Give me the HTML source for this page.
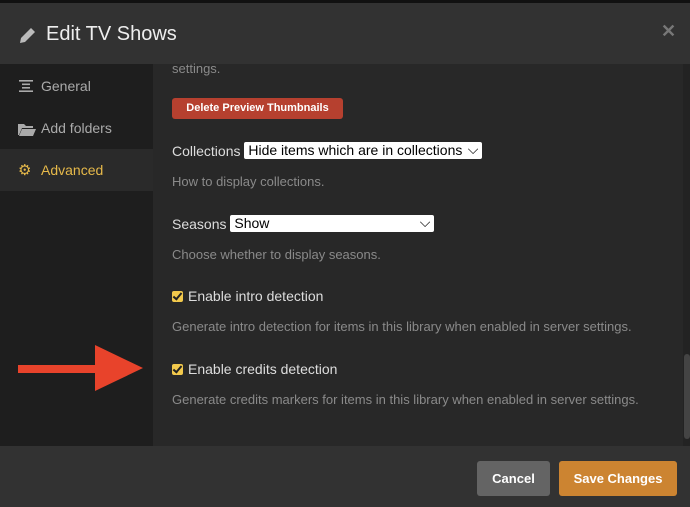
<!DOCTYPE html>
<html><head><style>
*{margin:0;padding:0;box-sizing:border-box}
body{width:690px;height:507px;background:#111;font-family:"Liberation Sans",sans-serif;position:relative;overflow:hidden}
.hdr{position:absolute;left:0;top:3px;width:690px;height:61px;background:#323232}
.hdr h1{position:absolute;left:46px;top:20px;font-size:20px;font-weight:normal;color:#eee}
.side{position:absolute;left:0;top:64px;width:153px;height:382px;background:#1e1e1e}
.item{position:absolute;left:0;width:153px;height:42px;color:#aaa;font-size:14px;line-height:42px;padding-left:41px}
.act{background:#2a2a2a;color:#e6b94a}
.content{position:absolute;left:153px;top:64px;width:537px;height:382px;background:#282828;color:#ddd;font-size:14px}
.t{position:absolute;left:19px;white-space:nowrap;line-height:18px}
.g{color:#8a8a8a;font-size:13px}
.sel{display:inline-block;background:#fff;color:#000;border-radius:2px;height:17px;line-height:17px;padding:0 4px;font-size:14px;vertical-align:top;position:relative}
.cb{display:inline-block;width:11px;height:11px;background:#f2c94c;border-radius:2px;vertical-align:-1px;margin-right:5px;position:relative}
.cb:after{content:"";position:absolute;left:3px;top:0px;width:3px;height:7px;border:solid #222;border-width:0 2px 2px 0;transform:rotate(40deg)}
.foot{position:absolute;left:0;top:446px;width:690px;height:61px;background:#323232}
.btn{position:absolute;top:15px;height:35px;border-radius:3px;color:#fff;font-weight:bold;font-size:13px;line-height:35px;text-align:center}
</style></head><body>
<div class="hdr">
<svg style="position:absolute;left:19px;top:23px" width="18" height="18" viewBox="0 0 18 18"><path d="M1 17l1-5L12 2l4 4L6 16z" fill="#bbb"/></svg>
<h1>Edit TV Shows</h1>
<div style="position:absolute;left:661px;top:18px;color:#777;font-size:18px;font-weight:bold">✕</div>
</div>
<div class="side">
<div class="item" style="top:1px">General</div>
<svg style="position:absolute;left:19px;top:16px" width="14" height="12"><rect y="0" width="14" height="1.6" fill="#aaa"/><rect x="3" y="3.5" width="8" height="1.6" fill="#aaa"/><rect x="3" y="7" width="8" height="1.6" fill="#aaa"/><rect y="10.4" width="14" height="1.6" fill="#aaa"/></svg>
<div class="item" style="top:43px">Add folders</div>
<svg style="position:absolute;left:18px;top:58px" width="18" height="14"><path d="M0 2h6l2 2h7v2H4L1 13H0z M4 7h14l-3 7H1z" fill="#aaa"/></svg>
<div class="item act" style="top:85px">Advanced</div>
<div style="position:absolute;left:18px;top:97px;color:#e6b94a;font-size:15px">⚙</div>
<svg style="position:absolute;left:18px;top:280px" width="126" height="50"><rect x="0" y="21" width="80" height="8" fill="#e8432b"/><path d="M77 1L125 24L77 47z" fill="#e8432b"/></svg>
</div>
<div class="content">
<div class="t g" style="top:-4px">settings.</div>
<div style="position:absolute;left:19px;top:34px;width:171px;height:21px;background:#b6402f;border-radius:3px;color:#fff;font-size:11px;font-weight:bold;text-align:center;line-height:21px">Delete Preview Thumbnails</div>
<div class="t" style="top:78px">Collections <span class="sel" style="width:238px">Hide items which are in collections<span style="position:absolute;right:4px;top:-1px">⌵</span></span></div>
<div class="t g" style="top:109px">How to display collections.</div>
<div class="t" style="top:151px">Seasons <span class="sel" style="width:204px">Show<span style="position:absolute;right:4px;top:-1px">⌵</span></span></div>
<div class="t g" style="top:182px">Choose whether to display seasons.</div>
<div class="t" style="top:223px"><span class="cb"></span>Enable intro detection</div>
<div class="t g" style="top:254px">Generate intro detection for items in this library when enabled in server settings.</div>
<div class="t" style="top:296px"><span class="cb"></span>Enable credits detection</div>
<div class="t g" style="top:327px">Generate credits markers for items in this library when enabled in server settings.</div>
<div style="position:absolute;left:530px;top:0;width:7px;height:382px;background:#232323"></div>
<div style="position:absolute;left:531px;top:290px;width:6px;height:85px;background:#444;border-radius:3px"></div>
</div>
<div class="foot">
<div class="btn" style="left:477px;width:73px;background:#646464">Cancel</div>
<div class="btn" style="left:559px;width:118px;background:#cc8431">Save Changes</div>
</div>
</body></html>
